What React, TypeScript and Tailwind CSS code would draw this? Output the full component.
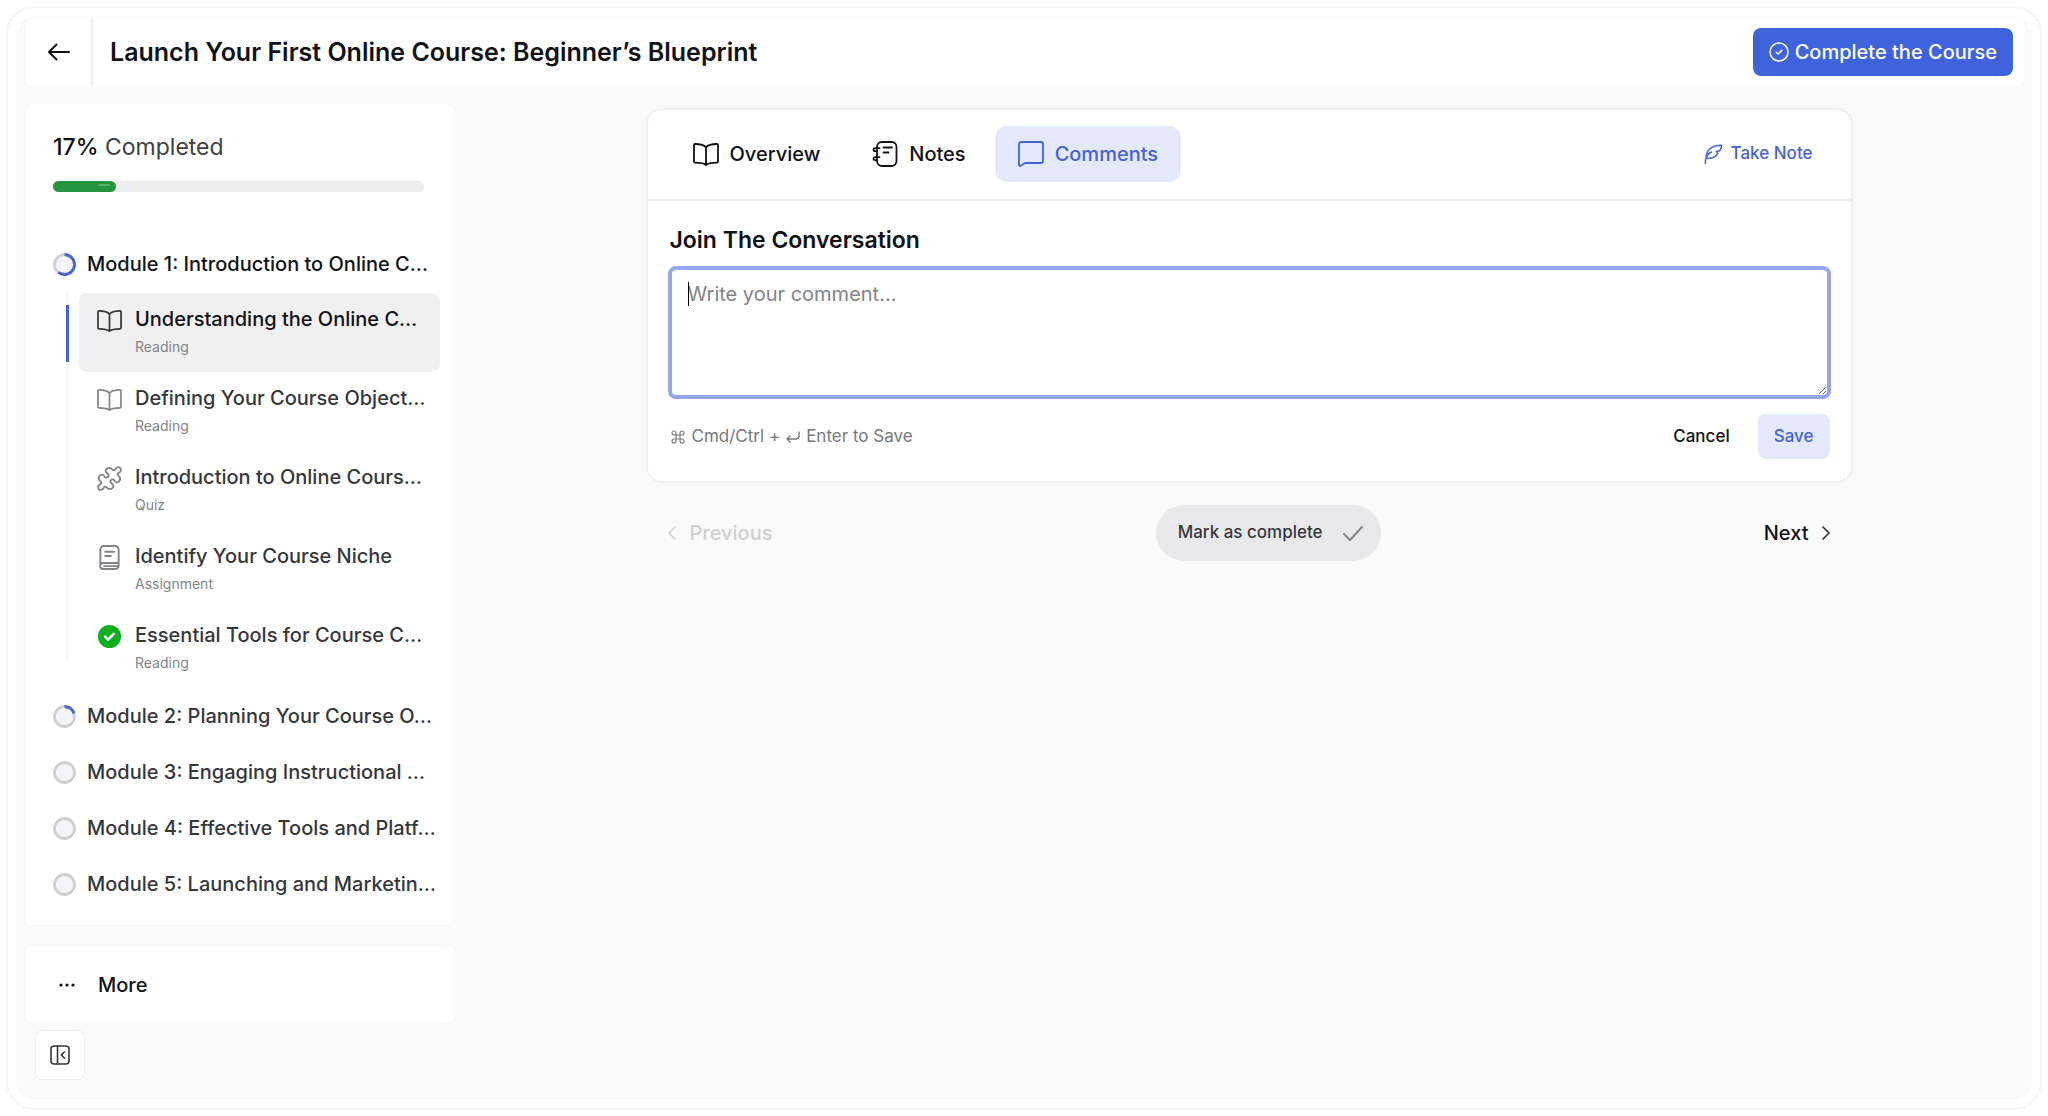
import React from "react";

type IconProps = { className?: string };

function Svg({ className, children, w = 1.8 }: IconProps & { children: React.ReactNode; w?: number }) {
  return (
    <svg viewBox="0 0 26 26" fill="none" stroke="currentColor" strokeWidth={w} strokeLinecap="round" strokeLinejoin="round" className={className} aria-hidden="true">
      {children}
    </svg>
  );
}

const BookIcon = ({ className }: IconProps) => (
  <Svg className={className}>
    <path d="M13 6.4C11.2 4 7 3 2 3a1 1 0 0 0-1 1v16.6a1 1 0 0 0 1 1c4.6 0 9 .4 11 2.4 2-2 6.4-2.4 11-2.4a1 1 0 0 0 1-1V4a1 1 0 0 0-1-1c-5 0-9.2 1-11 3.4ZM13 6.4V23.5" />
  </Svg>
);

const NotesIcon = ({ className }: IconProps) => (
  <Svg className={className}>
    <rect x="5" y="1" width="19.5" height="24" rx="5" />
    <path d="M11.5 6.500h8.500M11.5 11.5h5M7.5 7.200H3a1.5 1.5 0 0 0 0 3h2M7.5 16.200H3a1.5 1.5 0 0 0 0 3h2" />
  </Svg>
);

const CommentIcon = ({ className }: IconProps) => (
  <Svg className={className}>
    <path d="M3 1h20a2 2 0 0 1 2 2v17a2 2 0 0 1-2 2H7.5a2 2 0 0 0-1.4.6l-3.4 2.2A1.1 1.1 0 0 1 1 24V3a2 2 0 0 1 2-2Z" />
  </Svg>
);

const PuzzleIcon = ({ className }: IconProps) => (
  <svg viewBox="-1 -1 27 27" fill="none" stroke="currentColor" strokeWidth="2" strokeLinejoin="round" className={className} aria-hidden="true">
    <path d="M10.8 10.8C12.2 9.4 11.6 7.8 10.2 7C8 5.8 7.6 3.6 9.6 2C11.8 .4 14 1 15.6 2.8C17 4.2 18 3.8 18.6 2.6C19.6 .2 22.2 -.4 24 1C25.4 2.8 24.8 5.4 22.4 6.4C21.2 7 20.8 8 22.2 9.4C24 11 24.6 13.2 23 15.4C21.4 17.4 19.2 17 18 14.8C17.2 13.4 15.6 12.8 14.2 14.2C12.8 15.6 13.4 17.2 14.8 18C17 19.2 17.4 21.4 15.4 23C13.2 24.6 11 24 9.4 22.2C8 20.8 7 21.2 6.4 22.4C5.4 24.8 2.8 25.4 1 24C-.4 22.2 .2 19.6 2.6 18.6C3.8 18 4.2 17 2.8 15.6C1 14 .4 11.8 2 9.6C3.6 7.6 5.8 8 7 10.2C7.8 11.6 9.4 12.2 10.8 10.8Z" />
  </svg>
);

const AssignmentIcon = ({ className }: IconProps) => (
  <Svg className={className} w={2}>
    <path d="M3.5 22V4.5a3.5 3.5 0 0 1 3.5-3.5h12a3.5 3.5 0 0 1 3.5 3.5v17a3.5 3.5 0 0 1-3.5 3.5H6.5a3 3 0 0 1 0-6.200h16M7.5 22h15M8.5 7h9.5M8.5 11.5h6" />
  </Svg>
);

const DoneIcon = ({ className }: IconProps) => (
  <svg viewBox="0 0 26 26" fill="none" className={className} aria-hidden="true">
    <circle cx="13" cy="13" r="12" fill="#0fae1f" />
    <path d="m8.5 13.2 3 3 6-6" stroke="#fff" strokeWidth="2.6" strokeLinecap="round" strokeLinejoin="round" />
  </svg>
);

const FeatherIcon = ({ className }: IconProps) => (
  <Svg className={className} w={2}>
    <path d="M3 25.5c0-3 .3-5.500 1.2-8C5.5 13.8 7.8 11.8 11 10.5M4.2 18.5C3.5 9 10 1.5 24 1.5c.3 3.5-1.2 6.5-4 8h-2.5l1.5 3c-2 4-7 6.5-14.5 6" />
  </Svg>
);

function ProgressRing({ value }: { value: number }) {
  const c = 2 * Math.PI * 10;
  return (
    <svg viewBox="0 0 23 23" className="size-[23px] shrink-0 -rotate-90" role="img" aria-label={`${value}% complete`}>
      <circle cx="11.5" cy="11.5" r="10" fill="#f3f4f7" stroke="#cfcfd1" strokeWidth="2.8" />
      {value > 0 && (
        <circle cx="11.5" cy="11.5" r="10" fill="none" stroke="#4664cf" strokeWidth="2.8" strokeDasharray={`${(c * value) / 100} ${c}`} />
      )}
    </svg>
  );
}

type Lesson = { title: string; kind: string; Icon: (p: IconProps) => React.ReactElement; active?: boolean };

const lessons: Lesson[] = [
  { title: "Understanding the Online C…", kind: "Reading", Icon: BookIcon, active: true },
  { title: "Defining Your Course Object…", kind: "Reading", Icon: BookIcon },
  { title: "Introduction to Online Cours…", kind: "Quiz", Icon: PuzzleIcon },
  { title: "Identify Your Course Niche", kind: "Assignment", Icon: AssignmentIcon },
  { title: "Essential Tools for Course C…", kind: "Reading", Icon: DoneIcon },
];

const modules = [
  { title: "Module 2: Planning Your Course O…", value: 20 },
  { title: "Module 3: Engaging Instructional …", value: 0 },
  { title: "Module 4: Effective Tools and Platf…", value: 0 },
  { title: "Module 5: Launching and Marketin…", value: 0 },
];

function ModuleRow({ title, value, open }: { title: string; value: number; open?: boolean }) {
  return (
    <button type="button" aria-expanded={!!open} className={`flex h-14 w-full items-center gap-[11px] whitespace-nowrap text-left text-[20px] font-medium ${open ? "text-[#111216]" : "text-[#36373b]"}`}>
      <ProgressRing value={value} />
      {title}
    </button>
  );
}

function Sidebar() {
  return (
    <aside className="flex w-[426px] shrink-0 flex-col">
      <section className="rounded-lg bg-white pb-3 pl-[27px] pt-[29px]">
        <h2 className="text-[23px] leading-7 text-[#3f4044]">
          <span className="font-medium text-[#111216]">17%</span> Completed
        </h2>
        <div role="progressbar" aria-label="Course progress" aria-valuenow={17} className="mr-7 mt-5 h-[11px] rounded-full bg-[#eeeeee]">
          <div className="flex h-full w-[17%] justify-end rounded-full bg-[#25963f] pr-1.5 pt-[3px]">
            <span className="h-0.5 w-3 rounded-full bg-[#5cb270]" />
          </div>
        </div>
        <nav aria-label="Course content" className="mt-11">
          <ModuleRow title="Module 1: Introduction to Online C…" value={60} open />
          <ul className="relative pl-[26px] pr-3 pt-px">
            <li aria-hidden="true" className="absolute bottom-7 left-[13px] top-0 w-0.5 rounded-full bg-[#f5f5f6]" />
            {lessons.map(({ title, kind, Icon, active }) => (
              <li key={title} className="relative">
                {active && <span className="absolute -left-[13px] top-3 h-[57px] w-[3px] bg-[#4664cf]" />}
                <a href="#" className={`flex h-[79px] gap-[13px] whitespace-nowrap rounded-lg pl-[18px] pt-3 ${active ? "bg-[#f0f0f0] text-[#111216]" : "text-[#36373b]"}`}>
                  <Icon className={`mt-[3px] size-[25px] shrink-0 ${active ? "text-[#36373b]" : "text-[#838488]"}`} />
                  <span className="flex flex-col gap-1">
                    <span className="text-[20px] font-medium leading-7">{title}</span>
                    <span className="text-[14px] leading-5 text-[#838488]">{kind}</span>
                  </span>
                </a>
              </li>
            ))}
          </ul>
          {modules.map((m) => (
            <ModuleRow key={m.title} {...m} />
          ))}
        </nav>
      </section>
      <button type="button" className="mt-[23px] flex h-[75px] items-center gap-[23px] rounded-lg bg-white pl-[33px] text-[20px] font-medium text-[#111216]">
        <svg viewBox="0 0 16 4" className="h-1 w-4" fill="currentColor" aria-hidden="true">
          <circle cx="2" cy="2" r="1.6" />
          <circle cx="8" cy="2" r="1.6" />
          <circle cx="14" cy="2" r="1.6" />
        </svg>
        More
      </button>
      <button type="button" aria-label="Collapse sidebar" className="ml-[9px] mt-2 flex size-[50px] items-center justify-center rounded-lg border border-[#ececee] bg-white text-[#36373b]">
        <svg viewBox="0 0 20 20" className="size-5" fill="none" stroke="currentColor" strokeWidth="1.6" strokeLinecap="round" strokeLinejoin="round" aria-hidden="true">
          <rect x="1" y="1" width="18" height="18" rx="3" />
          <path d="M7.5 1v18M14.5 7l-3.3 3 3.3 3" />
        </svg>
      </button>
    </aside>
  );
}

function Tab({ label, Icon, selected }: { label: string; Icon: (p: IconProps) => React.ReactElement; selected?: boolean }) {
  return (
    <button type="button" role="tab" aria-selected={!!selected} className={`flex h-14 items-center gap-[11px] rounded-xl px-[23px] text-[20px] font-medium ${selected ? "bg-[#e3e8fb] text-[#4664cf]" : "text-[#111216]"}`}>
      <Icon className="size-[26px]" />
      {label}
    </button>
  );
}

export default function App() {
  return (
    <div className="flex min-h-screen bg-white p-1.5 font-['Inter',sans-serif]">
      <div className="flex flex-1 rounded-[28px] border-2 border-[#f7f7f7] bg-white p-2">
        <div className="flex-1 rounded-[20px] bg-[#fafafa] pb-4 pl-2.5 pr-2 pt-0.5">
          <header className="flex h-[68px] items-center rounded-lg bg-white pr-[11px]">
            <a href="#" aria-label="Back" className="flex h-full w-[67px] items-center justify-center border-r-2 border-[#f0f0f1] text-[#111216]">
              <svg viewBox="0 0 22 18" className="h-[18px] w-[22px]" fill="none" stroke="currentColor" strokeWidth="2" strokeLinecap="round" strokeLinejoin="round" aria-hidden="true">
                <path d="M21 9H1M8.5 1.5 1 9l7.5 7.5" />
              </svg>
            </a>
            <h1 className="ml-[17px] text-[25px] font-semibold leading-8 text-[#111216]">Launch Your First Online Course: Beginner’s Blueprint</h1>
            <button type="button" className="ml-auto flex h-12 items-center gap-1.5 rounded-lg bg-[#3e63dd] px-4 text-[20px] font-medium text-white">
              <svg viewBox="0 0 20 20" className="size-5" fill="none" stroke="currentColor" strokeWidth="1.5" strokeLinecap="round" strokeLinejoin="round" aria-hidden="true">
                <circle cx="10" cy="10" r="9" />
                <path d="m7.2 10.2 2 1.8 3.6-3.6" />
              </svg>
              Complete the Course
            </button>
          </header>
          <div className="mt-[18px] flex gap-[22px]">
            <Sidebar />
            <main className="min-w-0 flex-1 pt-1">
              <div className="mx-auto max-w-[1207px]">
                <section className="rounded-2xl border-2 border-[#f0f0f1] bg-white">
                  <div className="flex items-center border-b-2 border-[#f0f0f1] px-[22px] pb-[17px] pt-4">
                    <div role="tablist" aria-label="Lesson panels" className="flex gap-1.5">
                      <Tab label="Overview" Icon={BookIcon} />
                      <Tab label="Notes" Icon={NotesIcon} />
                      <Tab label="Comments" Icon={CommentIcon} selected />
                    </div>
                    <button type="button" className="ml-auto mr-4 flex items-center gap-2 text-[17px] font-medium text-[#4664cf]">
                      <FeatherIcon className="size-5" />
                      Take Note
                    </button>
                  </div>
                  <div className="px-5 pb-[22px] pt-[23px]">
                    <label htmlFor="comment" className="ml-0.5 block text-[23px] font-semibold leading-8 text-[#111216]">
                      Join The Conversation
                    </label>
                    <div className="relative mt-2.5 flex">
                      <textarea id="comment" placeholder="Write your comment..." className="h-[133px] w-full rounded-lg border-4 border-[#93a5ee] bg-white px-4 pt-2.5 text-[20px] leading-7 text-[#111216] outline-none placeholder:text-[#838488]" />
                      <span aria-hidden="true" className="absolute left-5 top-4 h-6 w-px bg-black" />
                    </div>
                    <div className="mt-[15px] flex items-center text-[17px]">
                      <div className="flex items-center gap-1.5 pl-0.5 text-[#77787c]">
                        <svg viewBox="0 0 24 24" className="size-4" fill="none" stroke="currentColor" strokeWidth="1.7" aria-hidden="true">
                          <path d="M15 6v12a3 3 0 1 0 3-3H6a3 3 0 1 0 3 3V6a3 3 0 1 0-3 3h12a3 3 0 1 0-3-3" />
                        </svg>
                        Cmd/Ctrl +
                        <svg viewBox="0 0 14 12" className="h-3 w-3.5" fill="none" stroke="currentColor" strokeWidth="1.4" strokeLinecap="round" strokeLinejoin="round" aria-hidden="true">
                          <path d="M13 1v4a3 3 0 0 1-3 3H1M4 5 1 8l3 3" />
                        </svg>
                        Enter to Save
                      </div>
                      <button type="button" className="ml-auto h-[45px] px-4 font-medium text-[#111216]">Cancel</button>
                      <button type="button" className="ml-3 mr-px h-[45px] rounded-lg bg-[#e3e8fb] px-4 font-medium text-[#4664cf]">Save</button>
                    </div>
                  </div>
                </section>
                <div className="mt-[22px] flex items-center justify-between px-[22px] text-[20px] font-medium">
                  <button type="button" disabled className="flex items-center gap-3.5 text-[#cfcfd1]">
                    <svg viewBox="0 0 8 14" className="h-3.5 w-2" fill="none" stroke="currentColor" strokeWidth="1.5" strokeLinecap="round" strokeLinejoin="round" aria-hidden="true">
                      <path d="M7 1 1 7l6 6" />
                    </svg>
                    Previous
                  </button>
                  <button type="button" className="flex h-14 items-center gap-5 rounded-full bg-[#e9e9eb] pl-[22px] pr-[18px] text-[17px] text-[#36373b]">
                    Mark as complete
                    <svg viewBox="0 0 20 15" className="h-[15px] w-5" fill="none" stroke="#838488" strokeWidth="2" strokeLinecap="round" strokeLinejoin="round" aria-hidden="true">
                      <path d="m1 8 6 6L19 1" />
                    </svg>
                  </button>
                  <button type="button" className="flex items-center gap-3.5 text-[#111216]">
                    Next
                    <svg viewBox="0 0 8 14" className="h-3.5 w-2" fill="none" stroke="#36373b" strokeWidth="1.7" strokeLinecap="round" strokeLinejoin="round" aria-hidden="true">
                      <path d="m1 1 6 6-6 6" />
                    </svg>
                  </button>
                </div>
              </div>
            </main>
          </div>
        </div>
      </div>
    </div>
  );
}
